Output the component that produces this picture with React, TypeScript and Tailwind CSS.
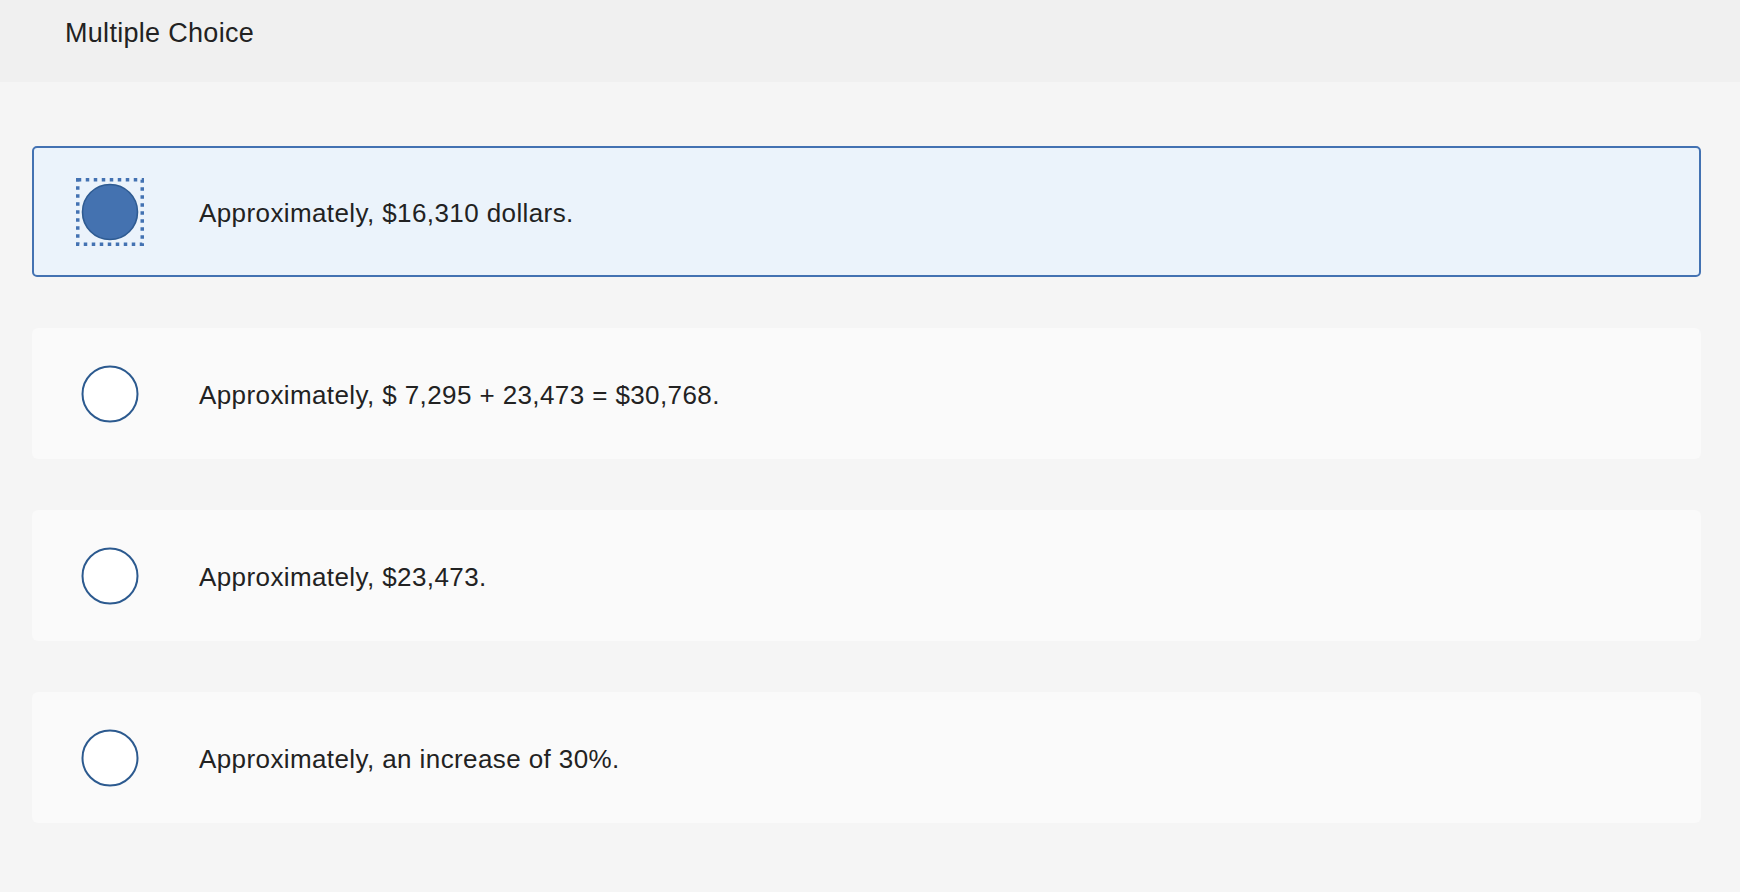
import React from "react";

type Choice = { id: string; label: string };

const choices: Choice[] = [
  { id: "a", label: "Approximately, $16,310 dollars." },
  { id: "b", label: "Approximately, $ 7,295 + 23,473 = $30,768." },
  { id: "c", label: "Approximately, $23,473." },
  { id: "d", label: "Approximately, an increase of 30%." },
];

function RadioMark({ checked }: { checked: boolean }) {
  return (
    <div className="relative flex h-[68px] w-[68px] shrink-0 items-center justify-center">
      {checked && (
        <svg
          className="absolute inset-0"
          width="68"
          height="68"
          viewBox="0 0 68 68"
          fill="none"
        >
          <rect
            x="1.75"
            y="1.75"
            width="64.5"
            height="64.5"
            stroke="#4372b2"
            strokeWidth="3.5"
            strokeDasharray="3.5 4.5"
          />
        </svg>
      )}
      <svg width="58" height="58" viewBox="0 0 58 58">
        <circle
          cx="29"
          cy="29"
          r="27.5"
          fill={checked ? "#4472b0" : "#ffffff"}
          stroke={checked ? "#2e5b92" : "#2c5a8f"}
          strokeWidth={checked ? 1.6 : 2}
        />
      </svg>
    </div>
  );
}

export default function App() {
  const selected = "a";
  return (
    <div
      className="min-h-screen bg-[#f5f5f5] text-[#222222]"
      style={{ fontFamily: '"Liberation Sans", Arial, sans-serif' }}
    >
      <header className="h-[82px] bg-[#f0f0f0] pl-[65px] pt-[20px]">
        <h1 className="text-[27px] leading-none font-normal tracking-[0.3px]">
          Multiple Choice
        </h1>
      </header>

      <main className="flex flex-col gap-[51px] pl-[32px] pt-[64px] pb-[60px]">
        {choices.map((c) => {
          const isOn = c.id === selected;
          return (
            <label
              key={c.id}
              className={
                isOn
                  ? "flex h-[131px] w-[1669px] cursor-pointer items-center rounded-[5px] border-2 border-[#4372b2] bg-[#ebf3fb] pl-[42px]"
                  : "flex h-[131px] w-[1669px] cursor-pointer items-center rounded-[6px] border-2 border-transparent bg-[#fafafa] pl-[42px]"
              }
            >
              <RadioMark checked={isOn} />
              <span className="ml-[55px] pt-[2px] text-[26px] leading-none tracking-[0.4px]">
                {c.label}
              </span>
            </label>
          );
        })}
      </main>
    </div>
  );
}
